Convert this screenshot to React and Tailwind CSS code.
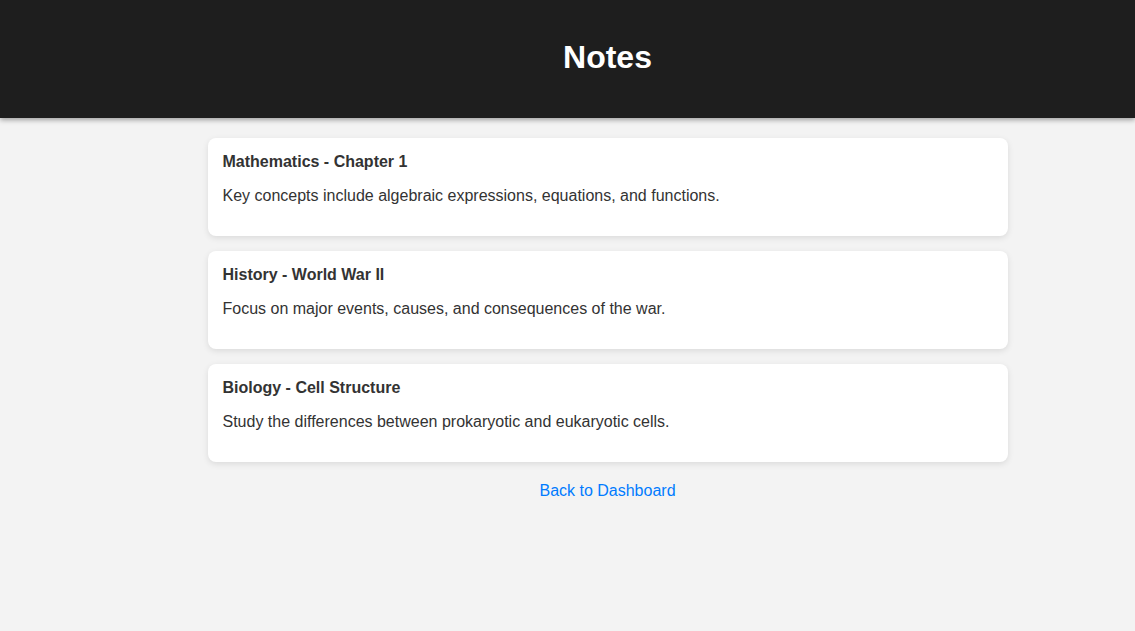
import React from "react";

const notes = [
  {
    title: "Mathematics - Chapter 1",
    body: "Key concepts include algebraic expressions, equations, and functions.",
  },
  {
    title: "History - World War II",
    body: "Focus on major events, causes, and consequences of the war.",
  },
  {
    title: "Biology - Cell Structure",
    body: "Study the differences between prokaryotic and eukaryotic cells.",
  },
];

const App = () => {
  return (
    <div className="min-h-[631px] bg-[#f3f3f3] text-[#333] font-['Liberation_Sans',Arial,sans-serif]">
      <header className="h-[118px] bg-[#1e1e1e] pl-[80px] pb-[4px] flex items-center justify-center shadow-[0_2px_5px_rgba(0,0,0,0.35)] relative">
        <h1 className="text-[32px] font-bold text-white leading-[37px]">Notes</h1>
      </header>

      <main className="pl-[80px] pt-[20px] flex flex-col items-center">
        <div className="w-[800px] flex flex-col gap-[15px]">
          {notes.map((note) => (
            <div
              key={note.title}
              className="bg-white rounded-[8px] p-[15px] shadow-[0_2px_6px_rgba(0,0,0,0.1)]"
            >
              <h3 className="text-base font-bold leading-[18px]">{note.title}</h3>
              <p className="text-base leading-[18px] mt-[16px] mb-[16px]">{note.body}</p>
            </div>
          ))}
        </div>
        <a href="#" className="mt-[20px] text-base leading-[18px] text-[#007bff]">
          Back to Dashboard
        </a>
      </main>
    </div>
  );
};

export default App;
